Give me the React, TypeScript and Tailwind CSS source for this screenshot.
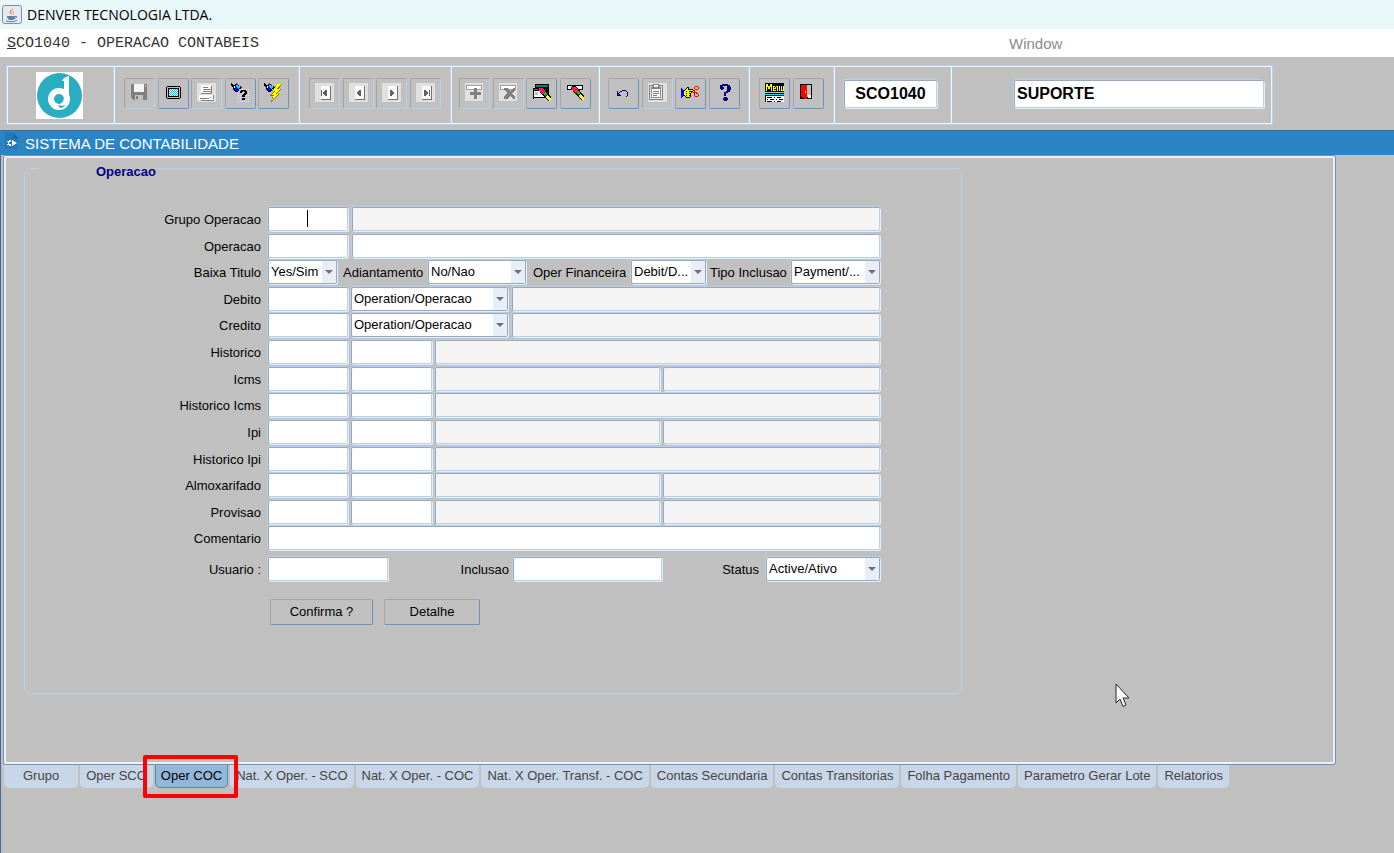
import { ReactNode } from "react";
import clsx from "clsx";

const COLORS: Record<string, string> = {
  k: "#000000",
  w: "#ffffff",
  y: "#ffff00",
  c: "#00e0ff",
  b: "#0000ff",
  n: "#000080",
  r: "#ff0000",
};

// draws a small bitmap, one character per pixel, "." is transparent
const Pixels = ({ rows, x = 0, y = 0 }: { rows: string[]; x?: number; y?: number }) => (
  <>
    {rows.flatMap((row, j) =>
      row.split("").map((ch, i) =>
        COLORS[ch] ? (
          <rect key={`${i}-${j}`} x={x + i} y={y + j} width={1} height={1} fill={COLORS[ch]} />
        ) : null
      )
    )}
  </>
);

const Icon = ({ children }: { children: ReactNode }) => (
  <svg width={19} height={19} viewBox="0 0 19 19" shapeRendering="crispEdges" aria-hidden="true">
    {children}
  </svg>
);

const TORCH = [
  "k....r.....",
  "kk..krk....",
  "kkkkkcck...",
  ".kkwbcccck.",
  "..kwbbccckk",
  "..kbbbbckk.",
  "..kbbbbk...",
  "...kbbbk...",
  "....kkk....",
];

const Pen = ({ x, y }: { x: number; y: number }) => (
  <g transform={`translate(${x} ${y})`}>
    <path d="M0 1l2-1h2l5 5 4 5v4h-2l-5-4-4-5-2-3z" fill="#000" />
    <path d="M1 1h3l3 3v1l-2 2H4L1 3z" fill="#ff2040" />
    <path d="M2 2h1v1H2zM4 3h2v1H4zM3 5h2v1H3z" fill="#ff00c0" />
    <path d="M7 5l2 2v1L7 9 5 7z" fill="#00d000" />
    <path d="M9 8l4 4v2h-2L7 10z" fill="#ffff00" />
    <path d="M9 9h1v1H9zM10 10h1v1h-1z" fill="#fff" />
  </g>
);

const SaveIcon = () => (
  <Icon>
    <path d="M1 1h16v16H3l-2-2z" fill="#808080" />
    <path d="M4 1h10v8H4z" fill="#f4f4f4" />
    <path d="M15 2h1v2h-1zM5 12h8v5H5z" fill="#c0c0c0" />
    <path d="M6 13h2v3H6z" fill="#808080" />
  </Icon>
);

const ScreenIcon = () => (
  <Icon>
    <path d="M3 3h13v1h1v11h-1v1H3v-1H2V4h1z" fill="#000" />
    <path d="M3 4h13v11H3z" fill="#c0c0c0" />
    <path d="M4 5h11v9H4z" fill="#000" />
    <path d="M5 6h9v7H5z" fill="#fff" />
    <Pixels
      x={5}
      y={6}
      rows={["c.c.c.c.c", ".c.c.c.c.", "c.c.c.c.c", ".c.c.c.c.", "c.c.c.c.c", ".c.c.c.c.", "c.c.c.c.c"]}
    />
  </Icon>
);

const PrintIcon = () => (
  <Icon>
    <path d="M0 0h19v19H0z" fill="#e0e0e0" />
    <path d="M4 2h10l1 2v7H4z" fill="#fff" />
    <path d="M6 4h5v1H6zM6 6h8v1H6zM6 8h8v1H6zM14 3h1v8h-1zM4 10h11v1H4z" fill="#808080" />
    <path d="M2 12h15v5H2z" fill="#fff" />
    <path d="M16 12h1v4h-1zM3 15h9v1H3zM4 17h13v1H4zM13 14h1v1h-1z" fill="#808080" />
  </Icon>
);

const QueryIcon = () => (
  <Icon>
    <Pixels
      x={7}
      y={5}
      rows={Array.from({ length: 14 }, (_, i) => (i % 2 ? "y.y.y.y.y.y" : "..........."))}
    />
    <Pixels x={0} y={0} rows={TORCH} />
    <Pixels
      x={9}
      y={7}
      rows={[
        ".kkkkk.",
        "kkk.kkk",
        "kk...kk",
        "....kkk",
        "...kkk.",
        "..kkk..",
        "..kkk..",
        ".......",
        "..kkk..",
        "..kkk..",
      ]}
    />
  </Icon>
);

const ExecuteIcon = () => (
  <Icon>
    <path d="M13 1h5l-3 5h2l-4 5h2l-8 8 2-6H6l4-5H8z" fill="#808000" />
    <path d="M13 1h4l-4 5h3l-4 5h2l-6 6 2-5H7l4-4H9z" fill="#ffff00" />
    <Pixels x={0} y={0} rows={TORCH} />
  </Icon>
);

const NavIcon = ({ glyph }: { glyph: string }) => (
  <Icon>
    <path d="M0 0h19v19H0z" fill="#e0e0e0" />
    <path d="M6 3h10v14H6z" fill="#707070" />
    <path d="M6 3h9v13H6z" fill="#fafafa" />
    <path d={glyph} fill="#606060" />
  </Icon>
);

const FirstIcon = () => <NavIcon glyph="M6 7h1v6H6zM8 9h1V8h1V7h2v6h-2v-1H9v-1H8z" />;
const PrevIcon = () => <NavIcon glyph="M8 9h1V8h1V7h2v6h-2v-1H9v-1H8z" />;
const NextIcon = () => <NavIcon glyph="M12 9h-1V8h-1V7H8v6h2v-1h1v-1h1z" />;
const LastIcon = () => <NavIcon glyph="M13 7h1v6h-1zM12 9h-1V8h-1V7H8v6h2v-1h1v-1h1z" />;

const InsertIcon = () => (
  <Icon>
    <path d="M0 0h18v18H0z" fill="#e0e0e0" />
    <path d="M1 2h16v5H1z" fill="#a0a0a0" />
    <path d="M2 3h14v3H2z" fill="#fff" />
    <path d="M9 5h3v4h4v3h-4v4H9v-4H5V9h4z" fill="#808080" />
  </Icon>
);

const RemoveIcon = () => (
  <Icon>
    <path d="M0 0h18v18H0z" fill="#e0e0e0" />
    <path d="M1 2h16v5H1z" fill="#a0a0a0" />
    <path d="M2 3h14v3H2z" fill="#fff" />
    <path d="M5 5h3l3 3 3-3h2v2l-3 3 3 4v2h-2l-3-3-3 3H5v-2l3-4-3-3z" fill="#808080" />
  </Icon>
);

const ClearFormIcon = () => (
  <Icon>
    <path d="M3 1h14v6H3z" fill="#000" />
    <path d="M4 2h12v2H4z" fill="#008080" />
    <path d="M1 5h14v1h2v5h-2v4H2v1H1z" fill="#000" />
    <path d="M2 6h12v1H2z" fill="#008080" />
    <path d="M2 8h12v6H2z" fill="#fff" />
    <path d="M3 9h3v3H3z" fill="#c0c0c0" />
    <Pen x={6} y={4} />
  </Icon>
);

const ClearFieldIcon = () => (
  <Icon>
    <path d="M1 2h16v5H1z" fill="#000" />
    <path d="M2 3h14v3H2z" fill="#fff" />
    <Pen x={5} y={3} />
  </Icon>
);

const UndoIcon = () => (
  <Icon>
    <Pixels
      x={3}
      y={7}
      rows={[
        ".....nnnn...",
        "n..nn....n..",
        "n.n.......n.",
        "nn........n.",
        "nnn.......n.",
        "nnnn......n.",
        ".........n..",
      ]}
    />
  </Icon>
);

const PasteIcon = () => (
  <Icon>
    <path d="M0 0h19v19H0z" fill="#e0e0e0" />
    <path d="M1 2h14v15H1z" fill="#808080" />
    <path d="M2 3h12v13H2z" fill="#e8e8e8" />
    <path d="M3 4h10v11H3z" fill="#909090" />
    <path d="M4 5h8v9H4z" fill="#fff" />
    <path d="M5 1h6v2h1v3H4V3h1z" fill="#808080" />
    <path d="M6 2h4v2H6z" fill="#fff" />
    <path d="M5 8h6v1H5zM5 10h6v1H5zM5 12h4v1H5z" fill="#808080" />
  </Icon>
);

const CutIcon = () => (
  <Icon>
    <Pixels
      x={0}
      y={3}
      rows={[
        "..............rrr.",
        "......kk.....r...r",
        "b....kyk.....r...r",
        "bb..kyykkkkk..rrr.",
        "bbbkyyyyyyyykr....",
        "bbbyykyykkkk.r....",
        "bbbyyyyyyyk.rrrr..",
        "bbbyykyykk...r.rr.",
        "bbbyyyyyyk...r...r",
        "bbbkykyykk...r...r",
        "bb..kyyyyk....rrr.",
        "b....kkkk.........",
      ]}
    />
  </Icon>
);

const HelpIcon = () => (
  <Icon>
    <path
      d="M5 2h2V1h6v1h2v2h1v3h-1v2h-2v1h-2v3H9V9h2V8h1V3H8v1h1v2H8v1H6V6H5zM9 14h3v1h1v2h-1v1H9v-1H8v-2h1z"
      fill="#000080"
    />
  </Icon>
);

const MenuIcon = () => (
  <Icon>
    <Pixels
      x={0}
      y={0}
      rows={[
        "kkkkkkkkkkkkkkkkkkk",
        "kyykkyykkkkkkkkkkkk",
        "kyykkyykkkkkkkkkkkk",
        "kyyyyyykyykyykykyky",
        "kykyykykykykykykyky",
        "kykyykykyyykykykyky",
        "kykkkkykykkkykykyky",
        "kykkkkykyyykykykyyy",
        "kkkkkkkkkkkkkkkkkkk",
        "...................",
        "kkkkkkkkkkkkkkkkkkk",
        "ccccccccccccccccccc",
        "kkkkkkkkkkkkkkkkkkk",
        "kwwwwwwwwwwwwwwwwww",
        "kwkkkkkwwkwwkkkkwww",
        "kwwwwwwwwwwwwwwwwww",
        "kwkwwkkkkwwkwwkkkkw",
        "kwwwwwwwwwwwwwwwwww",
        "kwkkkkkwwkwwkkkkwww",
      ]}
    />
  </Icon>
);

const ExitIcon = () => (
  <Icon>
    <path d="M1 1h12v15H1z" fill="#000" />
    <path d="M8 2h4v12H8z" fill="#c0c0c0" />
    <path d="M9 12h3v3H9z" fill="#fff" />
    <path d="M2 2h5l1 1v13H6v-1H4v-1H2z" fill="#ff0000" />
    <path d="M6 8h1v2H6z" fill="#ffff00" />
  </Icon>
);

const Logo = () => (
  <svg width={47} height={47} viewBox="0 0 47 47" role="img" aria-label="Denver">
    <rect width={47} height={47} fill="#fff" />
    <circle cx={23.5} cy={23.5} r={22.5} fill="#2badc1" />
    <circle cx={23} cy={27} r={8} fill="none" stroke="#fff" strokeWidth={6} />
    <path d="M26 9c1-3 4-4 7-5v23c0 4-2 7-6 9l-2-4c2-2 3-4 3-7V9z" fill="#fff" />
    <path d="M22 33c3 1 6 1 8 0-2 2-4 3-6 3z" fill="#2badc1" />
  </svg>
);

const JavaIcon = () => (
  <svg width={20} height={20} viewBox="0 0 20 20" aria-hidden="true">
    <rect x={0.5} y={0.5} width={19} height={18} rx={2} fill="#e6eaee" stroke="#7d8ea3" />
    <path d="M11 3c1 2-3 3-2 5 0 1 1 1 1 2-3-2-3-3-1-5 1-1 2-1 2-2zM12 6c-2 1-1 2-1 4 1-1 0-2 1-4z" fill="#ec7b26" />
    <path d="M5 11h8c0 2-1 3-2 4H7c-1-1-2-2-2-4z" fill="#5c83a8" />
    <path d="M13 11.500c3-1 2 2-1 2M4 16c3 1 8 1 11-.5" fill="none" stroke="#5c83a8" />
  </svg>
);

const Cursor = () => (
  <svg width={16} height={26} viewBox="0 0 16 26" aria-hidden="true">
    <path d="M1 1v19l4-4 3 7.500 3-1.500-3-7h6z" fill="#fff" stroke="#20242c" />
  </svg>
);

type Tool = { name: string; icon: ReactNode; disabled?: boolean };

const fileTools: Tool[] = [
  { name: "Salvar", icon: <SaveIcon />, disabled: true },
  { name: "Tela", icon: <ScreenIcon /> },
  { name: "Imprimir", icon: <PrintIcon />, disabled: true },
  { name: "Entrar consulta", icon: <QueryIcon /> },
  { name: "Executar consulta", icon: <ExecuteIcon /> },
];

const navTools: Tool[] = [
  { name: "Primeiro", icon: <FirstIcon />, disabled: true },
  { name: "Anterior", icon: <PrevIcon />, disabled: true },
  { name: "Proximo", icon: <NextIcon />, disabled: true },
  { name: "Ultimo", icon: <LastIcon />, disabled: true },
];

const recordTools: Tool[] = [
  { name: "Inserir", icon: <InsertIcon />, disabled: true },
  { name: "Remover", icon: <RemoveIcon />, disabled: true },
  { name: "Limpar tela", icon: <ClearFormIcon /> },
  { name: "Limpar campo", icon: <ClearFieldIcon /> },
];

const editTools: Tool[] = [
  { name: "Desfazer", icon: <UndoIcon /> },
  { name: "Colar", icon: <PasteIcon />, disabled: true },
  { name: "Recortar", icon: <CutIcon /> },
  { name: "Ajuda", icon: <HelpIcon /> },
];

const exitTools: Tool[] = [
  { name: "Menu", icon: <MenuIcon /> },
  { name: "Sair", icon: <ExitIcon /> },
];

const tabs = [
  "Grupo",
  "Oper SCO",
  "Oper COC",
  "Nat. X Oper. - SCO",
  "Nat. X Oper. - COC",
  "Nat. X Oper. Transf. - COC",
  "Contas Secundaria",
  "Contas Transitorias",
  "Folha Pagamento",
  "Parametro Gerar Lote",
  "Relatorios",
];

// etched divider: blue line with a light line on its right
const CELL = "mr-px shrink-0 border-r border-[#b8cfe5] shadow-[1px_0_0_#eef5fc]";

const ToolGroup = ({ tools, className }: { tools: Tool[]; className: string }) => (
  <div className={clsx(CELL, "flex justify-between pt-[11px]", className)}>
    {tools.map((tool) => (
      <button
        key={tool.name}
        type="button"
        aria-label={tool.name}
        disabled={tool.disabled}
        className={clsx(
          "flex h-[31px] w-[31px] justify-center rounded-xs border border-t-[#a4a4a4] border-l-[#a4a4a4] pt-1",
          tool.disabled ? "border-r-[#b8cfe5] border-b-[#b8cfe5]" : "border-r-[#7192b4] border-b-[#7192b4]"
        )}
      >
        {tool.icon}
      </button>
    ))}
  </div>
);

const FIELD =
  "h-[24px] min-w-0 rounded-xs border border-t-[#9ba8b7] border-l-[#9ba8b7] border-r-[#b8cfe5] border-b-[#b8cfe5] shadow-[1px_1px_0_#e4eefa,-1px_-1px_0_#b8cfe5] outline-none";

type FieldProps = { label: string; id?: string; readOnly?: boolean; className: string };

const Field = ({ label, id, readOnly, className }: FieldProps) => (
  <input
    id={id}
    aria-label={id ? undefined : label}
    readOnly={readOnly}
    className={clsx(FIELD, "px-1", readOnly ? "bg-[#f4f4f4]" : "bg-white", className)}
  />
);

type ComboProps = { label?: string; id?: string; value: string; className: string };

const Combo = ({ label, id, value, className }: ComboProps) => (
  <div className={clsx("relative", className)}>
    <select
      id={id}
      aria-label={label}
      className="block h-[24px] w-full appearance-none rounded-xs border border-[#9ba8b7] bg-white pl-[2px] text-[13px] leading-[20px] shadow-[1px_1px_0_#e4eefa,-1px_-1px_0_#b8cfe5] outline-none"
    >
      <option>{value}</option>
    </select>
    <span className="pointer-events-none absolute top-px right-px flex h-[22px] w-[14px] items-center justify-center bg-[#e8eef7]">
      <svg width={8} height={4} viewBox="0 0 8 4" aria-hidden="true">
        <path d="M0 0h8L4 4z" fill="#6c7080" />
      </svg>
    </span>
  </div>
);

const Row = ({ label, id, children }: { label: string; id: string; children: ReactNode }) => (
  <div className="flex items-start">
    <label htmlFor={id} className="w-[243px] shrink-0 pt-1 pr-[7px] text-right">
      {label}
    </label>
    <div className="flex min-w-0 flex-1">{children}</div>
  </div>
);

const AccountRow = ({ label, id }: { label: string; id: string }) => (
  <Row label={label} id={id}>
    <Field id={id} label={label} className="mr-[3px] w-[80px]" />
    <Combo label={`Tipo ${label}`} value="Operation/Operacao" className="mr-1 w-[157px]" />
    <Field label={`Descricao ${label}`} readOnly className="flex-1" />
  </Row>
);

const CodeRow = ({ label, id, split }: { label: string; id: string; split?: boolean }) => (
  <Row label={label} id={id}>
    <Field id={id} label={label} className="mr-[3px] w-[80px]" />
    <Field label={`${label} 2`} className="mr-[3px] w-[81px]" />
    <Field label={`Descricao ${label}`} readOnly className="flex-1" />
    {split && <Field label={`Complemento ${label}`} readOnly className="ml-[3px] w-[217px]" />}
  </Row>
);

const PUSH_BUTTON =
  "h-[26px] rounded-xs border border-t-[#a4a4a4] border-l-[#a4a4a4] border-r-[#7192b4] border-b-[#7192b4]";

const OperacaoForm = () => (
  <fieldset className="mt-[6px] ml-[18px] min-h-[530px] max-w-[938px] rounded-md border border-[#b8cfe5]">
    <legend className="ml-[14px] h-2 pl-[57px] leading-4 font-bold text-[#000080]">Operacao</legend>
    <div className="mr-[81px] pt-[35px] leading-[18px]">
      <div className="grid h-[346px] auto-rows-fr">
        <Row label="Grupo Operacao" id="grupo">
          <div className="relative mr-1 w-[80px]">
            <Field id="grupo" label="Grupo Operacao" className="block w-full" />
            <span className="absolute top-[3px] left-[39px] h-[17px] w-px bg-black" />
          </div>
          <Field label="Descricao Grupo" readOnly className="flex-1" />
        </Row>
        <Row label="Operacao" id="operacao">
          <Field id="operacao" label="Operacao" className="mr-1 w-[80px]" />
          <Field label="Descricao Operacao" className="flex-1" />
        </Row>
        <Row label="Baixa Titulo" id="baixa">
          <Combo id="baixa" value="Yes/Sim" className="w-[69px]" />
          <label htmlFor="adiantamento" className="w-[91px] pt-1 pl-[6px]">
            Adiantamento
          </label>
          <Combo id="adiantamento" value="No/Nao" className="w-[98px]" />
          <label htmlFor="financeira" className="w-[105px] pt-1 pl-[7px]">
            Oper Financeira
          </label>
          <Combo id="financeira" value="Debit/D..." className="w-[75px]" />
          <label htmlFor="tipo" className="w-[85px] pt-1 pl-1">
            Tipo Inclusao
          </label>
          <Combo id="tipo" value="Payment/..." className="flex-1" />
        </Row>
        <AccountRow label="Debito" id="debito" />
        <AccountRow label="Credito" id="credito" />
        <CodeRow label="Historico" id="historico" />
        <CodeRow label="Icms" id="icms" split />
        <CodeRow label="Historico Icms" id="historico-icms" />
        <CodeRow label="Ipi" id="ipi" split />
        <CodeRow label="Historico Ipi" id="historico-ipi" />
        <CodeRow label="Almoxarifado" id="almoxarifado" split />
        <CodeRow label="Provisao" id="provisao" split />
        <Row label="Comentario" id="comentario">
          <Field id="comentario" label="Comentario" className="flex-1" />
        </Row>
      </div>
      <div className="mt-1">
        <Row label="Usuario :" id="usuario">
          <Field id="usuario" label="Usuario" className="w-[120px]" />
          <label htmlFor="inclusao" className="flex-1 pt-1 pr-1 text-right">
            Inclusao
          </label>
          <Field id="inclusao" label="Inclusao" className="w-[149px]" />
          <label htmlFor="status" className="w-[104px] pt-1 pr-[7px] text-right">
            Status
          </label>
          <Combo id="status" value="Active/Ativo" className="w-[114px]" />
        </Row>
      </div>
      <div className="mt-[18px] ml-[245px] flex gap-[11px]">
        <button type="button" className={clsx(PUSH_BUTTON, "w-[103px]")}>
          Confirma ?
        </button>
        <button type="button" className={clsx(PUSH_BUTTON, "w-[96px]")}>
          Detalhe
        </button>
      </div>
    </div>
  </fieldset>
);

const App = () => {
  return (
    <div className="relative flex min-h-screen flex-col overflow-hidden bg-[#c0c0c0] font-['Liberation_Sans',Arial,sans-serif] text-[13px] text-black">
      {/* window title */}
      <header className="flex h-[29px] items-center gap-[5px] bg-[#e8f7f8] pl-[2px] font-['Open_Sans','Noto_Sans',sans-serif] text-[14px]">
        <JavaIcon />
        <h1>DENVER TECNOLOGIA LTDA.</h1>
      </header>

      {/* menu bar */}
      <nav className="flex h-[28px] items-center bg-white pt-[2px]">
        <button
          type="button"
          className="w-[1009px] pl-[7px] text-left font-['Liberation_Mono',monospace] text-[15px] text-[#333]"
        >
          <span className="underline">S</span>CO1040 - OPERACAO CONTABEIS
        </button>
        <button type="button" className="text-[15px] text-[#8c8c8c]">
          Window
        </button>
      </nav>

      {/* toolbar */}
      <div className="mt-2 mb-[5px] ml-[6px] flex h-[60px] max-w-[1267px] border border-[#b8cfe5] p-px shadow-[inset_0_0_0_1px_#eef5fc]">
        <div className={clsx(CELL, "w-[106px] pt-[5px] pl-[28px]")}>
          <Logo />
        </div>
        <ToolGroup tools={fileTools} className="w-[184px] px-[9px]" />
        <ToolGroup tools={navTools} className="w-[151px] px-[9px]" />
        <ToolGroup tools={recordTools} className="w-[147px] px-[7px]" />
        <ToolGroup tools={editTools} className="w-[149px] px-[8px]" />
        <ToolGroup tools={exitTools} className="w-[84px] px-[9px]" />
        <div className={clsx(CELL, "w-[116px] pt-[13px] pl-[9px]")}>
          <input
            aria-label="Programa"
            readOnly
            value="SCO1040"
            className={clsx(FIELD, "h-[28px] w-[93px] bg-white text-center text-[16px] font-bold")}
          />
        </div>
        <div className="flex-1 pt-[13px] pr-[7px] pl-[62px]">
          <input
            aria-label="Usuario logado"
            readOnly
            value="SUPORTE"
            className={clsx(FIELD, "h-[28px] w-full bg-white pl-[2px] text-[16px] font-bold")}
          />
        </div>
      </div>

      {/* inner window */}
      <div className="flex h-[25px] items-center border-t border-[#47689b] bg-[#2c84c4] pl-[5px] text-white">
        <svg width={13} height={16} viewBox="0 0 13 16" className="mb-1" aria-hidden="true">
          <path d="M0 0h8l5 5v11H0z" fill="#2379b8" />
          <path d="M8 0v5h5z" fill="#1765a0" />
          <path d="M7 7l5 3-5 3zM6 7H4v1H2v1h1v2H2v1h2v1h2v-2H4V9h2z" fill="#fff" />
        </svg>
        <h2 className="ml-[7px] pt-[2px] text-[15px]">SISTEMA DE CONTABILIDADE</h2>
      </div>

      <main className="flex-1 border-l border-[#47689b] pl-[3px]">
        <div className="mt-px mr-[59px] flow-root min-h-[608px] rounded-xs border-2 border-[#eaf1f9] shadow-[0_0_0_1px_#7790b0]">
          <OperacaoForm />
        </div>
        <div role="tablist" className="mt-px flex gap-[2px] text-[#444]">
          {tabs.map((tab) => {
            const active = tab === "Oper COC";
            return (
              <div key={tab} className="relative">
                <button
                  type="button"
                  role="tab"
                  aria-selected={active}
                  className={clsx(
                    "h-[23px] rounded-b-[5px] border-x border-b whitespace-nowrap",
                    tab === "Grupo" ? "px-[18px]" : "px-[5px]",
                    active
                      ? "border-[#5d86b0] bg-[#93b7d9] text-black"
                      : "border-[#c9d6e8] bg-[#c9d6e8]"
                  )}
                >
                  {tab}
                </button>
                {active && (
                  <span className="pointer-events-none absolute -top-[10px] -right-[10px] -bottom-[10px] -left-[12px] z-10 rounded-xs border-4 border-[#ff0000]" />
                )}
              </div>
            );
          })}
        </div>
      </main>

      <div className="pointer-events-none absolute top-[683px] left-[1115px]">
        <Cursor />
      </div>
    </div>
  );
};

export default App;
